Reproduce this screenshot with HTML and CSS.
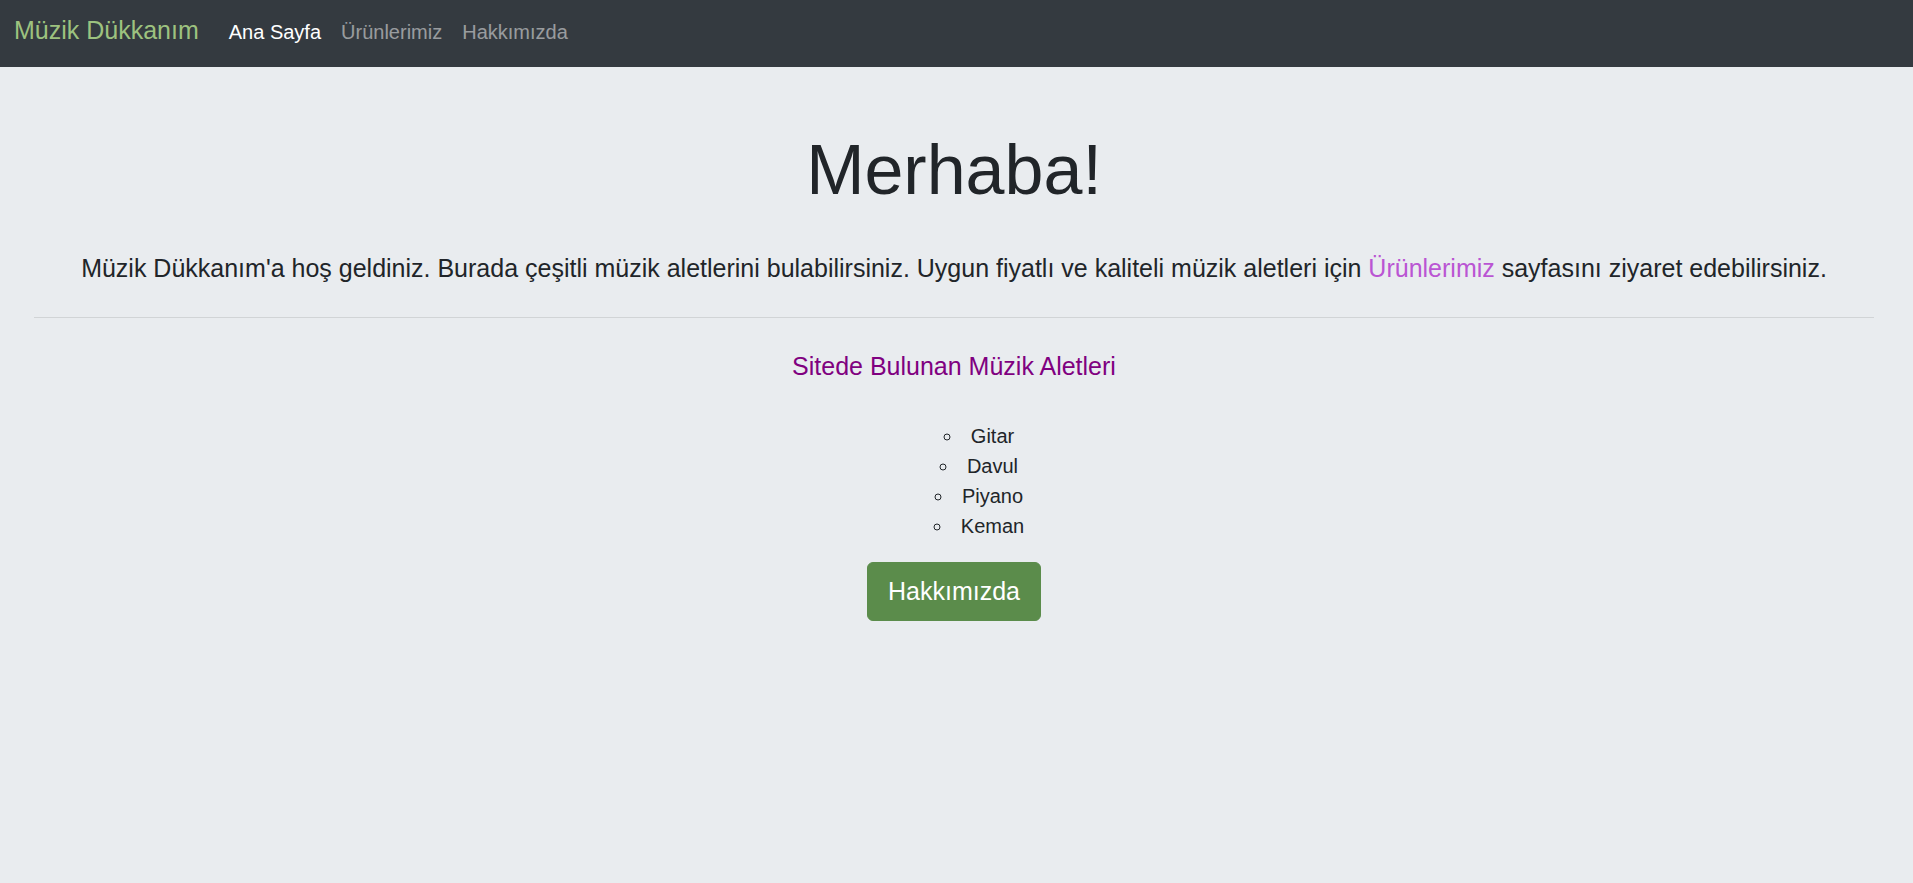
FILE: index.html
```html
<!DOCTYPE html>
<html lang="tr">
<head>
<meta charset="utf-8">
<title>Müzik Dükkanım</title>
<link rel="stylesheet" href="styles.css">
</head>
<body>
<nav class="navbar">
  <a class="brand" href="#">Müzik Dükkanım</a>
  <ul class="nav">
    <li><a class="nav-link active" href="#">Ana Sayfa</a></li>
    <li><a class="nav-link" href="#">Ürünlerimiz</a></li>
    <li><a class="nav-link" href="#">Hakkımızda</a></li>
  </ul>
</nav>
<main class="jumbotron">
  <h1 class="title">Merhaba!</h1>
  <p class="lead">Müzik Dükkanım'a hoş geldiniz. Burada çeşitli müzik aletlerini bulabilirsiniz. Uygun fiyatlı ve kaliteli müzik aletleri için <a class="inline-link" href="#">Ürünlerimiz</a> sayfasını ziyaret edebilirsiniz.</p>
  <hr class="divider">
  <h5 class="subtitle">Sitede Bulunan Müzik Aletleri</h5>
  <ul class="instruments">
    <li>Gitar</li>
    <li>Davul</li>
    <li>Piyano</li>
    <li>Keman</li>
  </ul>
  <a class="btn" href="#">Hakkımızda</a>
</main>
</body>
</html>
```
FILE: styles.css
```css
html, body {
  margin: 0;
  padding: 0;
}
body {
  background: #e9ecef;
  font-family: "Liberation Sans", Arial, sans-serif;
  color: #212529;
  min-height: 100vh;
}
a {
  text-decoration: none;
}
.navbar {
  box-sizing: border-box;
  height: 67px;
  background: #343a40;
  display: flex;
  align-items: baseline;
  padding: 12px 14px 0;
}
.brand {
  font-size: 25px;
  line-height: 37.5px;
  color: #9dc27f;
  margin-right: 20px;
  white-space: nowrap;
}
.nav {
  display: flex;
  list-style: none;
  margin: 0;
  padding: 0;
}
.nav-link {
  display: block;
  font-size: 20px;
  line-height: 30px;
  padding: 0 10px;
  color: rgba(255, 255, 255, 0.5);
}
.nav-link.active {
  color: #fff;
}
.jumbotron {
  display: flex;
  flex-direction: column;
  align-items: center;
  text-align: center;
  padding: 61px 39px 0 34px;
}
.title {
  font-size: 70px;
  line-height: 84px;
  font-weight: 300;
  margin: 0 0 38px;
}
.lead {
  font-size: 25px;
  line-height: 37.5px;
  margin: 0;
}
.inline-link {
  color: #ba55d3;
}
.divider {
  align-self: stretch;
  border: 0;
  border-top: 1px solid rgba(0, 0, 0, 0.1);
  margin: 29px 0 0;
  height: 0;
}
.subtitle {
  font-size: 25px;
  line-height: 30px;
  font-weight: 400;
  color: #800080;
  margin: 33px 0 0;
}
.instruments {
  list-style: circle inside;
  margin: 40px 0 0;
  padding: 0 0 0 50px;
  font-size: 20px;
  line-height: 30px;
}
.btn {
  display: inline-block;
  margin-top: 21px;
  padding: 10px 20px;
  font-size: 25px;
  line-height: 37.5px;
  color: #fff;
  background: #5b8c4b;
  border: 1px solid #5b8c4b;
  border-radius: 6px;
}
```
